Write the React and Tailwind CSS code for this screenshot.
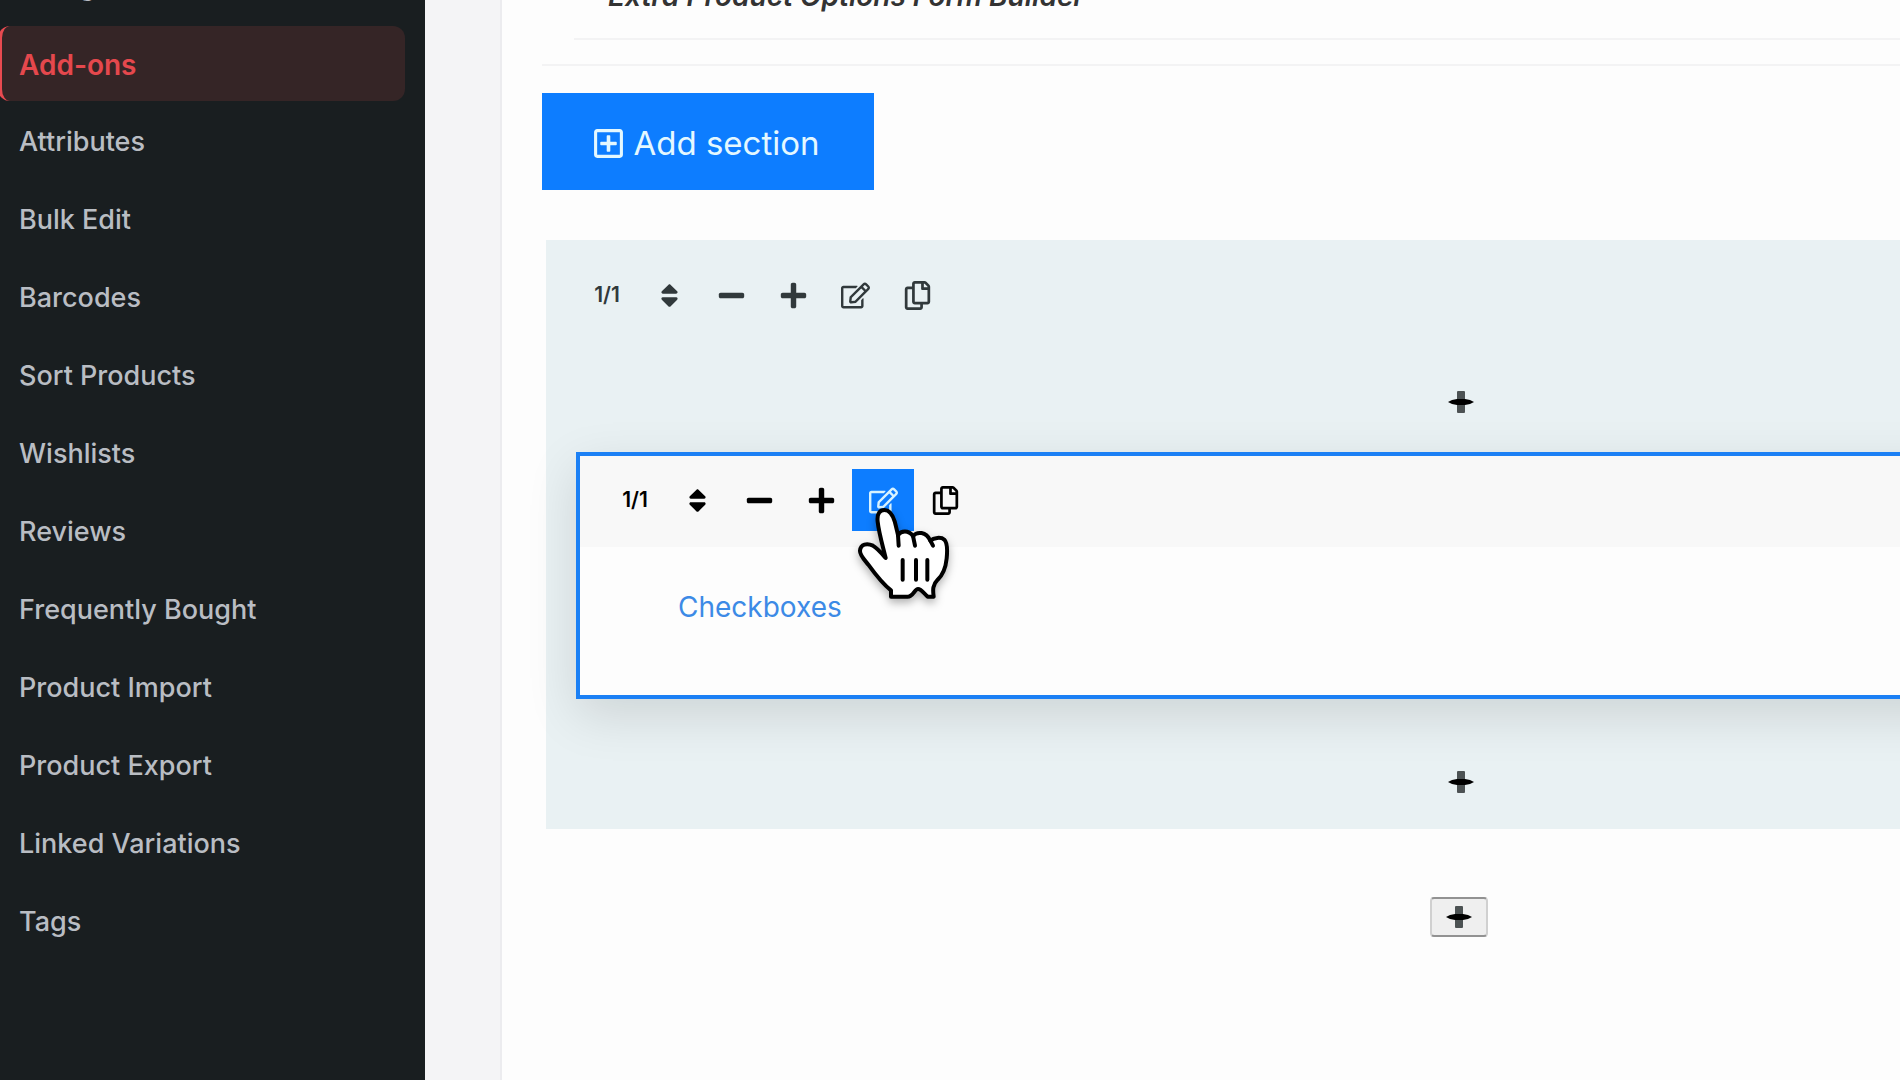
import React from "react";
import {
  FaSort,
  FaMinus,
  FaPlus,
  FaRegEdit,
  FaRegCopy,
  FaRegPlusSquare,
} from "react-icons/fa";

const menu = [
  "Categories",
  "Add-ons",
  "Attributes",
  "Bulk Edit",
  "Barcodes",
  "Sort Products",
  "Wishlists",
  "Reviews",
  "Frequently Bought",
  "Product Import",
  "Product Export",
  "Linked Variations",
  "Tags",
];

function Sidebar() {
  return (
    <aside className="w-[425px] shrink-0 overflow-hidden bg-[#191e20]">
      <nav aria-label="Products" className="-mt-13 flex flex-col gap-[3px] pr-5">
        {menu.map((label) =>
          label === "Add-ons" ? (
            <a
              key={label}
              href="#"
              aria-current="page"
              className="-ml-0.5 flex h-[75px] items-center rounded-xl border-l-4 border-[#e84a50] bg-[#352526] pt-0.5 pl-[17px] text-[28px] font-semibold text-[#e5484d]"
            >
              {label}
            </a>
          ) : (
            <a
              key={label}
              href="#"
              className="flex h-[75px] items-center pt-0.5 pl-[19px] text-[27px] font-medium text-[#b9bdc3]"
            >
              {label}
            </a>
          )
        )}
      </nav>
    </aside>
  );
}

function HandPointer() {
  return (
    <svg
      aria-hidden="true"
      viewBox="886 198 294 300"
      className="pointer-events-none absolute top-9 left-[3px] z-10 h-[100px] w-[98px] drop-shadow-[0_4px_4px_rgba(0,0,0,0.3)]"
      fill="none"
      stroke="#000"
      strokeWidth="12"
      strokeLinecap="round"
      strokeLinejoin="round"
    >
      <path
        fill="#fff"
        d="M978 357 C972 330 958 285 954 248 C951 222 962 213 974 213 C990 213 999 228 1005 247 C1009 262 1012 276 1015 288 C1024 275 1046 272 1060 291 C1072 277 1099 277 1112 305 C1122 296 1144 293 1154 302 C1164 312 1163 338 1161 358 C1158 388 1149 408 1134 422 C1119 437 1119 452 1122 473 L1104 473 C1094 465 1086 450 1075 450 C1065 450 1060 473 1044 473 L994 473 L994 454 C968 434 944 402 926 377 C916 364 900 349 901 335 C903 315 922 312 940 320 C953 327 967 344 978 357 Z"
      />
      <path d="M1015 288 L1017 320 M1060 291 L1066 320 M1112 305 L1120 320" />
      <path d="M1029 363 V422 M1069 363 V422 M1103 363 V422" />
    </svg>
  );
}

const tool = "flex size-[62px] shrink-0 items-center justify-center";

function Toolbar({ active }) {
  return (
    <div
      role="toolbar"
      aria-label={active ? "Element tools" : "Section tools"}
      className={
        active
          ? "flex items-center text-[29px] text-black"
          : "flex items-center text-[29px] text-[#31393b]"
      }
    >
      <button className={`${tool} text-[21px] font-semibold`}>1/1</button>
      <button aria-label="Resize" className={tool}>
        <FaSort />
      </button>
      <button aria-label="Decrease" className={tool}>
        <FaMinus />
      </button>
      <button aria-label="Increase" className={tool}>
        <FaPlus />
      </button>
      <div className="relative">
        <button
          aria-label="Edit"
          className={active ? `${tool} bg-[#0d7dff] text-[#d8f3ff]` : tool}
        >
          <FaRegEdit />
        </button>
        {active && <HandPointer />}
      </div>
      <button aria-label="Duplicate" className={tool}>
        <FaRegCopy />
      </button>
    </div>
  );
}

function PlusGlyph() {
  return (
    <svg aria-hidden="true" viewBox="0 0 26 22" className="h-[22px] w-[26px]">
      <rect x="9" y="0" width="8" height="22" rx="1" fill="#4c5253" />
      <path d="M0 11 4 9 9 8h8l5 1 4 2-4 2-5 1H9L4 13z" fill="#000" />
    </svg>
  );
}

export default function App() {
  return (
    <div className="flex h-screen overflow-hidden bg-[#f4f4f6] font-['Inter',sans-serif]">
      <Sidebar />
      <main className="ml-[75px] min-w-0 flex-1 overflow-hidden border-l-2 border-[#ececef] bg-[#fdfdfd]">
        <div className="-mr-[476px] ml-10">
          <header className="border-b-2 border-[#f3f3f4] pb-6">
            <div className="ml-8 flex h-10 items-end border-b-2 border-[#f3f3f4] pb-[26px] pl-[34px]">
              <h1 className="text-[28px] leading-8 font-semibold text-[#333] italic">
                Extra Product Options Form Builder
              </h1>
            </div>
          </header>

          <button className="mt-[27px] flex h-[97px] w-[332px] items-center justify-center gap-2 bg-[#0d7dff] pt-1 pr-1 text-[33px] text-[#e4f8ff]">
            <FaRegPlusSquare />
            Add section
          </button>

          <section className="mt-[50px] ml-1 bg-[#e9f1f3] px-[30px] pt-6">
            <Toolbar />
            <div className="flex h-[126px] items-end justify-center pb-[31px]">
              <button aria-label="Add element above" className="p-2">
                <PlusGlyph />
              </button>
            </div>
            <article className="h-[247px] border-4 border-[#1b80f5] bg-[#fdfdfd] shadow-[0_16px_48px_rgba(0,0,0,0.12)]">
              <div className="bg-[#f8f8f8] px-6 pt-[13px] pb-4">
                <Toolbar active />
              </div>
              <a href="#" className="ml-[98px] mt-[42px] inline-block text-[28px] leading-9 text-[#3c8ae6]">
                Checkboxes
              </a>
            </article>
            <div className="flex h-[130px] items-end justify-center pb-7">
              <button aria-label="Add element below" className="p-2">
                <PlusGlyph />
              </button>
            </div>
          </section>

          <div className="mt-[68px] flex justify-center">
            <button
              aria-label="Add section below"
              className="flex h-10 w-[58px] items-center justify-center rounded border-2 border-x-[#d0d0d0] border-y-[#929292] bg-[#efefef]"
            >
              <PlusGlyph />
            </button>
          </div>
        </div>
      </main>
    </div>
  );
}
